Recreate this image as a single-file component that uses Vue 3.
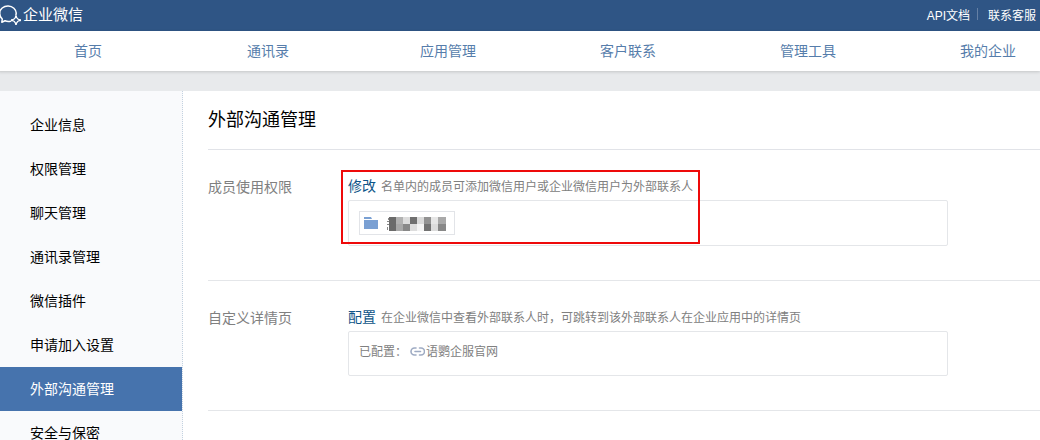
<script setup>
const tabs = ['首页', '通讯录', '应用管理', '客户联系', '管理工具', '我的企业']
const menu = ['企业信息', '权限管理', '聊天管理', '通讯录管理', '微信插件', '申请加入设置', '外部沟通管理', '安全与保密']
const active = '外部沟通管理'
const mosaic = [
  ['#6b6b6b', '#b2b2b2', '#dcdcdc', '#707070', '#dadada', '#929292', '#e6e6e6', '#a9a9a9'],
  ['#6b6b6b', '#a8a8a8', '#888888', '#dddddd', '#f4f4f4', '#727272', '#dcdcdc', '#888888'],
]
</script>

<template>
  <div class="page">
    <header class="top">
      <a class="brand" href="#">
        <svg width="22" height="22" viewBox="0 0 22 22" fill="none" stroke="#fff" stroke-width="1.5" stroke-linejoin="round" stroke-linecap="round" aria-hidden="true">
          <path d="M10.500 17.200C8.600 17.600 7 17.500 5 16.700L1.800 18.200L2.300 15C-1.200 12.200 -1 6.600 2.200 4C5.600 1.200 10.800 1.400 13.900 4.200C16 6.200 16.600 8.700 15.900 11" />
          <path d="M16 12.500L17.600 14.800L20 16.200L17.600 17.600L16 19.900L14.400 17.600L12 16.200L14.400 14.800Z" stroke-width="1.200" />
          <path d="M16 12.600v.1M20 16.200v.1M16 19.800v.1M12 16.200v.1" stroke-width="2.200" />
        </svg>
        <span>企业微信</span>
      </a>
      <div class="links">
        <a href="#">API文档</a>
        <span class="bar"></span>
        <a href="#">联系客服</a>
      </div>
    </header>
    <nav class="tabs">
      <a v-for="t in tabs" :key="t" href="#">{{ t }}</a>
    </nav>
    <div class="body">
      <aside class="side">
        <a v-for="m in menu" :key="m" href="#" :class="{ on: m === active }">{{ m }}</a>
      </aside>
      <main class="main">
        <h1>外部沟通管理</h1>
        <section class="row">
          <h2>成员使用权限</h2>
          <div class="field">
            <p class="line"><a href="#">修改</a><span>名单内的成员可添加微信用户或企业微信用户为外部联系人</span></p>
            <div class="box">
              <div class="tag">
                <svg width="15" height="13" viewBox="0 0 15 13" fill="#7aa0d3" aria-hidden="true">
                  <path d="M0 0H7L8 2H0Z M0 3H14V12H0Z" />
                </svg>
                <svg class="mosaic" width="61" height="14" viewBox="0 0 61 14" shape-rendering="crispEdges" aria-hidden="true">
                  <path d="M2 1h1v2h-1z M1 4h2v1h-2z M1 7h2v1h-2z M1 10h1v3h-1z" fill="#888" />
                  <template v-for="(cells, r) in mosaic" :key="r">
                    <rect v-for="(c, i) in cells" :key="i" :x="3 + i * 7" :y="r * 7" width="8" height="7" :fill="c" />
                  </template>
                </svg>
              </div>
            </div>
            <div class="highlight"></div>
          </div>
        </section>
        <section class="row">
          <h2>自定义详情页</h2>
          <div class="field">
            <p class="line"><a href="#">配置</a><span>在企业微信中查看外部联系人时，可跳转到该外部联系人在企业应用中的详情页</span></p>
            <div class="box conf">
              <span>已配置：</span>
              <svg width="15" height="10" viewBox="0 0 15 10" fill="none" stroke="#9eabc3" stroke-width="1.600" stroke-linecap="round" aria-hidden="true">
                <path d="M6 1H4.500A3.500 3.500 0 0 0 4.500 8H6M9.500 1H11A3.500 3.500 0 0 1 11 8H9.500M5 4.500H10.500" />
              </svg>
              <span>语鹦企服官网</span>
            </div>
          </div>
        </section>
      </main>
    </div>
  </div>
</template>

<style>
body {
  margin: 0;
  overflow: hidden;
}
</style>

<style scoped>
.page {
  height: 100vh;
  overflow: hidden;
  display: flex;
  flex-direction: column;
  background: #e8eaec;
  font-family: "Liberation Sans", "Noto Sans CJK SC", sans-serif;
  font-size: 14px;
  color: #000;
}
a {
  text-decoration: none;
  color: inherit;
}
.top {
  flex: none;
  box-sizing: border-box;
  display: flex;
  justify-content: space-between;
  align-items: center;
  height: 31px;
  background: #2f5585;
  color: #fff;
  padding: 0 4px 3px 0;
}
.brand {
  display: flex;
  align-items: center;
  gap: 1px;
  padding-top: 2px;
  line-height: 22px;
  font-size: 15px;
}
.links {
  display: flex;
  align-items: center;
  font-size: 12px;
}
.bar {
  width: 1px;
  height: 12px;
  margin: 0 10px 0 7px;
  background: #6480a5;
}
.tabs {
  flex: none;
  display: flex;
  height: 40px;
  margin-left: -2px;
  background: #fff;
  box-shadow: 0 1px 3px rgba(0, 0, 0, 0.16);
}
.tabs a {
  flex: none;
  width: 180px;
  text-align: center;
  line-height: 40px;
  color: #567dab;
}
.body {
  flex: 1;
  min-height: 0;
  display: flex;
  margin-top: 20px;
  background: #fff;
}
.side {
  flex: none;
  width: 182px;
  padding-top: 12px;
  background: #f9fafc;
  border-right: 1px dotted #c4d2e0;
}
.side a {
  display: block;
  height: 44px;
  line-height: 44px;
  padding-left: 30px;
}
.side .on {
  background: #4673ad;
  color: #fff;
}
.main {
  flex: 1;
  min-width: 0;
  padding-left: 25px;
}
h1 {
  margin: 0;
  height: 58px;
  line-height: 58px;
  font-size: 18px;
  font-weight: 400;
  border-bottom: 1px solid #e1e3e8;
}
.row {
  display: flex;
  padding: 25px 0 34px;
  border-bottom: 1px solid #e4e6e9;
}
h2 {
  flex: none;
  width: 140px;
  margin: 0;
  font-size: 14px;
  font-weight: 400;
  line-height: 24px;
  color: #808080;
}
.field {
  position: relative;
  flex: 1;
  max-width: 600px;
}
.line {
  margin: 0;
  height: 25px;
  line-height: 22px;
  font-size: 12px;
  color: #808080;
  white-space: nowrap;
}
.line a {
  margin-right: 5px;
  font-size: 14px;
  color: #0e5588;
}
.box {
  box-sizing: border-box;
  min-height: 45px;
  padding: 10px;
  border: 1px solid #e4e6e9;
  border-radius: 2px;
}
.tag {
  box-sizing: border-box;
  display: flex;
  align-items: center;
  gap: 7px;
  width: 96px;
  height: 24px;
  padding-left: 4px;
  border: 1px solid #e2e4e8;
}
.mosaic {
  margin-top: 2px;
}
.conf {
  display: flex;
  align-items: center;
  padding-bottom: 13px;
  font-size: 12px;
  line-height: 20px;
  color: #808080;
}
.conf svg {
  margin: 0 1px 0 3px;
}
.highlight {
  position: absolute;
  top: -5px;
  left: -7px;
  box-sizing: border-box;
  width: 359px;
  height: 74px;
  border: 2px solid #ee0a0a;
}
</style>
